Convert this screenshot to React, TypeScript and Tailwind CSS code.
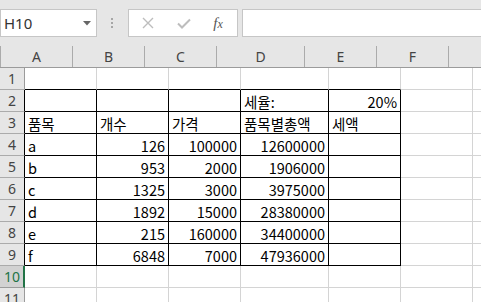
import React from "react";

type Cell = { t?: string; r?: boolean };

const cols = ["A", "B", "C", "D", "E", "F", ""];
const widths = ["w-[72px]", "w-[72px]", "w-[72px]", "w-[88px]", "w-[72px]", "w-[72px]", "w-[40px]"];

const rows: Cell[][] = [
  [],
  [{}, {}, {}, { t: "세율:" }, { t: "20%", r: true }],
  [{ t: "품목" }, { t: "개수" }, { t: "가격" }, { t: "품목별총액" }, { t: "세액" }],
  [{ t: "a" }, { t: "126", r: true }, { t: "100000", r: true }, { t: "12600000", r: true }, {}],
  [{ t: "b" }, { t: "953", r: true }, { t: "2000", r: true }, { t: "1906000", r: true }, {}],
  [{ t: "c" }, { t: "1325", r: true }, { t: "3000", r: true }, { t: "3975000", r: true }, {}],
  [{ t: "d" }, { t: "1892", r: true }, { t: "15000", r: true }, { t: "28380000", r: true }, {}],
  [{ t: "e" }, { t: "215", r: true }, { t: "160000", r: true }, { t: "34400000", r: true }, {}],
  [{ t: "f" }, { t: "6848", r: true }, { t: "7000", r: true }, { t: "47936000", r: true }, {}],
  [],
  [],
];

const cellFont = { fontFamily: '"Noto Sans CJK KR", "Noto Sans", sans-serif' };
const hdrFont = { fontFamily: '"Noto Sans", "Liberation Sans", sans-serif' };

export default function App() {
  return (
    <div className="w-[481px] h-[302px] overflow-hidden bg-white">
      {/* toolbar */}
      <div className="h-[46px] bg-[#e6e6e6] flex items-start pt-[9px]">
        <div className="w-[97px] h-[28px] bg-white border border-[#c6c6c6] flex items-center justify-between pl-[3px] pr-[5px]">
          <span className="text-[15px] text-[#333] leading-none" style={hdrFont}>H10</span>
          <svg width="8" height="5" viewBox="0 0 8 5"><path d="M0 0 H8 L4 4.5 Z" fill="#666" /></svg>
        </div>
        <div className="w-[31px] h-[28px] flex flex-col items-center justify-center gap-[2px] pr-[1px]">
          <div className="w-[2px] h-[2px] bg-[#a6a6a6]" />
          <div className="w-[2px] h-[2px] bg-[#a6a6a6]" />
          <div className="w-[2px] h-[2px] bg-[#a6a6a6]" />
        </div>
        <div className="w-[110px] h-[28px] bg-white border border-[#c6c6c6] flex items-center">
          <div className="w-[36px] flex justify-center pl-[2px]">
            <svg width="12" height="12" viewBox="0 0 12 12"><path d="M1 1 L11 11 M11 1 L1 11" stroke="#bdbdbd" strokeWidth="1.4" /></svg>
          </div>
          <div className="w-[36px] flex justify-center pl-[2px]">
            <svg width="14" height="11" viewBox="0 0 14 11"><path d="M1 5.5 L5 9.5 L13 1.5" stroke="#bdbdbd" strokeWidth="2" fill="none" /></svg>
          </div>
          <div className="w-[36px] flex justify-center pr-[2px]">
            <span className="italic text-[#555] text-[15px] leading-none" style={{ fontFamily: '"Liberation Serif", serif' }}>
              f<span className="text-[12px]">x</span>
            </span>
          </div>
        </div>
        <div className="ml-[4px] flex-1 h-[28px] bg-white border border-[#c6c6c6] border-r-0" />
      </div>

      {/* header row */}
      <div className="flex h-[22px] bg-[#e6e6e6] border-b border-[#9b9b9b]">
        <div className="w-[25px] h-full border-r border-[#ababab] relative overflow-hidden">
          <svg className="absolute left-[8px] top-[5px]" width="13" height="13" viewBox="0 0 13 13"><path d="M13 0 V13 H0 Z" fill="#b7b7b7" /></svg>
        </div>
        {cols.map((c, i) => (
          <div
            key={i}
            className={`${widths[i]} shrink-0 h-full border-r border-[#ababab] flex items-center justify-center text-[14px] text-[#444]`}
            style={hdrFont}
          >
            {c}
          </div>
        ))}
      </div>

      {rows.map((row, ri) => {
        const rn = ri + 1;
        const boxed = rn >= 2 && rn <= 9;
        const sel = rn === 10;
        return (
          <div key={ri} className="flex h-[22px]">
            <div
              className={`w-[25px] shrink-0 h-full flex items-center justify-center text-[14px] border-b ${
                sel
                  ? "bg-[#d2d2d2] text-[#217346] border-r-2 border-r-[#217346] border-b-[#9b9b9b]"
                  : boxed
                  ? "bg-[#e6e6e6] text-[#444] border-r border-r-black border-b-[#ababab]"
                  : "bg-[#e6e6e6] text-[#444] border-r border-r-[#9b9b9b] border-b-[#ababab]"
              }`}
              style={hdrFont}
            >
              <span className={sel ? "pl-[1px]" : ""}>{rn}</span>
            </div>
            {cols.map((_, ci) => {
              const cell = row[ci] || {};
              const inBox = boxed && ci <= 4;
              const rightBlack = inBox;
              const bottomBlack = (inBox) || (rn === 1 && ci <= 4);
              return (
                <div
                  key={ci}
                  className={`${widths[ci]} shrink-0 h-full border-r border-b flex items-center px-[3px] pt-[2px] text-[14.5px] text-black whitespace-nowrap ${
                    rightBlack ? "border-r-black" : "border-r-[#d4d4d4]"
                  } ${bottomBlack ? "border-b-black" : "border-b-[#d4d4d4]"} ${cell.r ? "justify-end" : "justify-start"}`}
                  style={cellFont}
                >
                  {cell.t}
                </div>
              );
            })}
          </div>
        );
      })}
    </div>
  );
}
